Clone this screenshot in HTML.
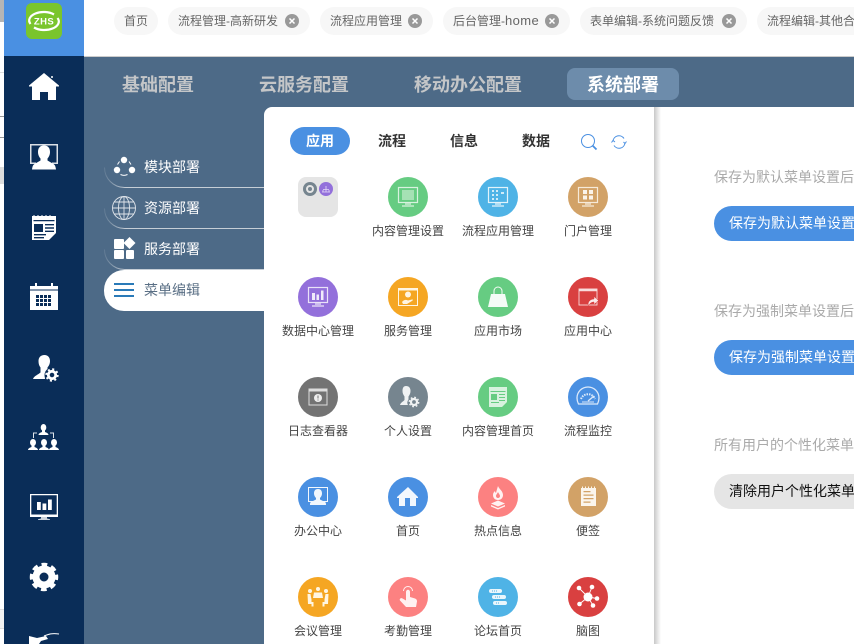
<!DOCTYPE html>
<html><head><meta charset="utf-8">
<style>
*{box-sizing:border-box;margin:0;padding:0}
html,body{width:854px;height:644px;overflow:hidden;background:#fff}
body{position:relative;font-family:"Liberation Sans","Noto Sans CJK SC",sans-serif}
.a{position:absolute}
.chip{position:absolute;top:7px;height:28px;background:#f7f7f7;border-radius:14px;font-size:12px;line-height:28px;color:#666;padding-left:10px;white-space:nowrap;overflow:hidden}
.x{position:absolute;top:7px;width:14px;height:14px}
.tab{position:absolute;top:75px;font-size:18px;font-weight:700;line-height:20px;color:#c4c6c8;white-space:nowrap}
.mi{position:absolute;left:104px;width:160px;height:41px;font-size:14px;line-height:41px;color:#fff;padding-left:40px}
.ptab{position:absolute;top:127px;height:28px;width:60px;text-align:center;font-size:14px;font-weight:700;line-height:28px;color:#333}
.c{position:absolute;width:40px;height:40px;border-radius:50%}
.c svg{display:block;width:40px;height:40px}
.l{position:absolute;width:90px;text-align:center;font-size:12px;line-height:18px;color:#444;white-space:nowrap}
.rt{position:absolute;left:714px;width:140px;overflow:hidden;font-size:14px;line-height:20px;color:#aaa;white-space:nowrap}
.btn{position:absolute;left:714px;width:140px;overflow:hidden;height:35px;border-radius:18px 0 0 18px;font-size:14px;line-height:35px;padding-left:15px;white-space:nowrap;background:#4a90e2;color:#fff}
.side{position:absolute;left:24px;width:40px;height:40px}
</style></head><body>

<!-- left strip -->
<div class="a" style="left:0;top:0;width:4px;height:22px;background:#b5b5b5"></div>
<div class="a" style="left:0;top:72px;width:4px;height:1px;background:#ddd"></div>
<div class="a" style="left:0;top:116px;width:4px;height:1px;background:#999"></div>
<div class="a" style="left:0;top:137px;width:4px;height:1px;background:#999"></div>
<div class="a" style="left:0;top:167px;width:4px;height:17px;background:#ddd"></div>
<div class="a" style="left:0;top:609px;width:4px;height:20px;background:#f2f2f2;border-top:1px solid #ddd;border-bottom:1px solid #ddd"></div>

<!-- sidebar -->
<div class="a" style="left:4px;top:0;width:80px;height:644px;background:#0a2d58"></div>
<div class="a" style="left:4px;top:0;width:80px;height:56px;background:#4a90e2"></div>
<div class="a" style="left:26px;top:3px;width:36px;height:36px;background:#7ac52c;border-radius:6px"></div>
<svg class="a" style="left:26px;top:3px" width="36" height="36" viewBox="0 0 36 36"><path d="M4.500 21A14.500 8.500 0 0 1 28 11.500" fill="none" stroke="#fff" stroke-width="2.200"/><path d="M31.500 15A14.500 8.500 0 0 1 8 24.500" fill="none" stroke="#fff" stroke-width="2.200"/><text x="18" y="21.500" font-family="Liberation Sans" font-size="9.500" font-weight="700" fill="#fff" text-anchor="middle" letter-spacing=".4">ZHS</text></svg>

<svg class="side" style="top:67px" viewBox="0 0 40 40" fill="#fff"><path d="M20 6 5 18.500v1h3V33h8V25h8v8h8V19.500h3v-1L20 6z"/><circle cx="28" cy="10" r="1"/></svg>
<svg class="side" style="top:137px" viewBox="0 0 40 40" fill="#fff"><path fill-rule="evenodd" d="M6 7h28v20h-6v-1.500h4.500V8.500h-25v17H12V27H6z" opacity=".85"/><path d="M20 8.500c4.500 0 6 3 6 6.500 0 3-1.300 5.200-2.500 6.500v2l6 3.500c1.300.8 2 2 2.500 5.500H8c.5-3.500 1.200-4.700 2.500-5.500l6-3.500v-2C15.300 20.200 14 18 14 15c0-3.500 1.500-6.500 6-6.500z"/></svg>
<svg class="side" style="top:207px" viewBox="0 0 40 40" fill="#fff"><path fill-rule="evenodd" d="M8 9h1.500V8h1v1h3V8h1v1h3V8h1v1h3V8h1v1h3V8h1v1H32v17l-7 7H8zM9.500 13v1.300h21V13zM10 17v8h9v-8zM21 17v1.400h9V17zM21 20.300v1.400h9v-1.400zM21 23.600V25h9v-1.400zM10 27v1.400h12V27zM10 30v1.400h10V30z"/><rect x="12" y="19" width="4" height="4" fill="#0a2d58"/></svg>
<svg class="side" style="top:277px" viewBox="0 0 40 40" fill="#fff"><path d="M6 9h5V6h2v3h14V6h2v3h5v24H6z"/><path fill="#0a2d58" d="M6 12.500h28v1H6z"/><g fill="#0a2d58"><rect x="12" y="18" width="3" height="3"/><rect x="16" y="18" width="3" height="3"/><rect x="20" y="18" width="3" height="3"/><rect x="24" y="18" width="3" height="3"/><rect x="12" y="22" width="3" height="3"/><rect x="16" y="22" width="3" height="3"/><rect x="20" y="22" width="3" height="3"/><rect x="24" y="22" width="3" height="3"/><rect x="12" y="26" width="3" height="3"/><rect x="16" y="26" width="3" height="3"/><rect x="20" y="26" width="3" height="3"/><rect x="24" y="26" width="3" height="3"/></g></svg>
<svg class="side" style="top:348px" viewBox="0 0 40 40" fill="#fff"><path d="M20.500 7c3.500 0 5.500 2.500 5.500 6 0 3-1.300 5-2.500 6.500V22c-1.500 2-3 5-2.500 9H9c1-2.500 3-3.500 5.500-5l2-1.500v-5c-1.200-1.500-2-3.500-2-6.500 0-3.500 2-6 6-6z"/><circle cx="28" cy="27" r="7.500" fill="#0a2d58"/><circle cx="28" cy="27" r="3.700" fill="none" stroke="#fff" stroke-width="2.800"/><circle cx="28" cy="27" r="5.700" fill="none" stroke="#fff" stroke-width="2" stroke-dasharray="2 2.480"/></svg>
<svg class="side" style="top:418px" viewBox="0 0 40 40" fill="#fff"><ellipse cx="19.500" cy="9.500" rx="2.800" ry="3.500"/><path d="M14.500 17c0-1.500 2-2.500 3.500-3v-2h3v2c1.500.5 3.500 1.500 3.500 3z"/><ellipse cx="9" cy="24.500" rx="3" ry="3.500"/><ellipse cx="20" cy="24.500" rx="3" ry="3.500"/><ellipse cx="30" cy="24.500" rx="3" ry="3.500"/><path d="M4 32c0-1.500 2-2.500 3.500-3v-2h3v2c1.500.5 3.500 1.500 3.500 3zM15 32c0-1.500 2-2.500 3.500-3v-2h3v2c1.500.5 3.500 1.500 3.500 3zM25 32c0-1.500 2-2.500 3.500-3v-2h3v2c1.500.5 3.500 1.500 3.500 3z"/><path d="M9.500 20v-5H13M29.500 20v-5H26" fill="none" stroke="#dfe4ea" stroke-width="1"/></svg>
<svg class="side" style="top:486px" viewBox="0 0 40 40" fill="#fff"><path fill-rule="evenodd" d="M6 8h28v23H6zM7.300 9.300V28.500h25.400V9.300z"/><path d="M13 16h3.800v8H13zM18.500 17.500h3.800v6.500h-3.800zM24 13.500h3.800V24H24z"/><path d="M17 31h6v1.500l3 .7V34H14v-.8l3-.7z" opacity=".8"/></svg>
<svg class="side" style="top:557px" viewBox="0 0 40 40"><circle cx="20" cy="20" r="8" fill="none" stroke="#fff" stroke-width="7"/><circle cx="20" cy="20" r="12" fill="none" stroke="#fff" stroke-width="4.500" stroke-dasharray="5.500 3.920" stroke-dashoffset="2.700"/></svg>
<svg class="a" style="left:24px;top:630px" width="40" height="14" viewBox="0 0 40 14"><path d="M5 6 13 8 22 6 24 9 17 11 15 14H5z" fill="#fff"/><path d="M20 6C25 4 28 3 35 4" fill="none" stroke="#fff" stroke-width="1"/></svg>

<!-- header tabs -->
<div class="a" style="left:84px;top:56px;width:770px;height:1px;background:#ccc"></div>
<div class="chip" style="left:114px;width:44px">首页</div>
<div class="chip" style="left:168px;width:142px">流程管理-高新研发<svg class="x" style="left:117px" viewBox="0 0 14 14"><circle cx="7" cy="7" r="7" fill="#999"/><path d="M4.500 4.500l5 5M9.500 4.500l-5 5" stroke="#fff" stroke-width="1.500"/></svg></div>
<div class="chip" style="left:320px;width:113px">流程应用管理<svg class="x" style="left:88px" viewBox="0 0 14 14"><circle cx="7" cy="7" r="7" fill="#999"/><path d="M4.500 4.500l5 5M9.500 4.500l-5 5" stroke="#fff" stroke-width="1.500"/></svg></div>
<div class="chip" style="left:443px;width:127px">后台管理-<span style="font-size:13px;letter-spacing:.4px">home</span><svg class="x" style="left:102px" viewBox="0 0 14 14"><circle cx="7" cy="7" r="7" fill="#999"/><path d="M4.500 4.500l5 5M9.500 4.500l-5 5" stroke="#fff" stroke-width="1.500"/></svg></div>
<div class="chip" style="left:580px;width:167px">表单编辑-系统问题反馈<svg class="x" style="left:142px" viewBox="0 0 14 14"><circle cx="7" cy="7" r="7" fill="#999"/><path d="M4.500 4.500l5 5M9.500 4.500l-5 5" stroke="#fff" stroke-width="1.500"/></svg></div>
<div class="chip" style="left:757px;width:97px;border-radius:14px 0 0 14px">流程编辑-其他合</div>

<!-- blue band -->
<div class="a" style="left:84px;top:57px;width:770px;height:587px;background:#4d6a87"></div>
<div class="tab" style="left:122px">基础配置</div>
<div class="tab" style="left:259px">云服务配置</div>
<div class="tab" style="left:414px">移动办公配置</div>
<div class="a" style="left:567px;top:68px;width:112px;height:32px;background:#6d8cab;border-radius:8px"></div>
<div class="tab" style="left:587px;color:#fff">系统部署</div>

<!-- white area -->
<div class="a" style="left:264px;top:107px;width:590px;height:537px;background:#fff;border-top-left-radius:8px"></div>
<div class="a" style="left:654px;top:107px;width:7px;height:537px;background:linear-gradient(90deg,#c8c8c8,#fff)"></div>

<!-- side menu -->
<svg class="a" style="left:100px;top:140px" width="164" height="135" viewBox="100 140 164 135" fill="none">
<defs><linearGradient id="g" gradientUnits="userSpaceOnUse" x1="104" y1="0" x2="126" y2="0"><stop offset="0" stop-color="#c6ced6" stop-opacity=".15"/><stop offset="1" stop-color="#c6ced6"/></linearGradient></defs>
<path d="M104.500 167.500a20 20 0 0 0 20 20H264" stroke="url(#g)"/>
<path d="M104.500 208.500a20 20 0 0 0 20 20H264" stroke="url(#g)"/>
<path d="M104.500 249.500a20 20 0 0 0 20 20H264" stroke="url(#g)"/>
</svg>
<div class="mi" style="top:147px">模块部署</div>
<div class="mi" style="top:188px">资源部署</div>
<div class="mi" style="top:229px">服务部署</div>
<div class="a" style="left:104px;top:270px;width:160px;height:41px;background:#fff;border-radius:20px 0 0 20px;font-size:14px;line-height:41px;color:#5a6f85;padding-left:40px">菜单编辑</div>
<svg class="a" style="left:112px;top:155px" width="24" height="24" viewBox="0 0 24 24" fill="#fff"><circle cx="12" cy="5" r="3.200"/><circle cx="5" cy="15" r="3.200"/><circle cx="20" cy="15" r="3.200"/><path d="M5.500 9.500 7.500 6.500M19 9.500 17 6.500M8.500 19.500a8 8 0 0 0 7 0" fill="none" stroke="#fff" stroke-width="1"/></svg>
<svg class="a" style="left:112px;top:196px" width="24" height="24" viewBox="0 0 24 24" fill="none" stroke="#dfe4ea" stroke-width=".9"><circle cx="12" cy="12" r="11.500"/><ellipse cx="12" cy="12" rx="5.500" ry="11.500"/><path d="M12 .5v23M.5 12h23M2.500 6h19M2.500 18h19"/></svg>
<svg class="a" style="left:112px;top:237px" width="24" height="24" viewBox="0 0 24 24" fill="#fff"><rect x="2" y="2" width="10" height="10" rx="1"/><rect x="2" y="13" width="10" height="9" rx="1"/><rect x="14" y="13" width="8" height="9" rx="1"/><path d="M17.500 0l6 6-6 6-6-6z"/></svg>
<svg class="a" style="left:114px;top:283px" width="20" height="14" viewBox="0 0 20 14" fill="#2a7ab8"><rect width="20" height="2"/><rect y="6" width="20" height="2"/><rect y="12" width="20" height="2"/></svg>

<!-- panel tabs -->
<div class="ptab" style="left:290px;background:#4a90e2;color:#fff;border-radius:14px">应用</div>
<div class="ptab" style="left:362px">流程</div>
<div class="ptab" style="left:434px">信息</div>
<div class="ptab" style="left:506px">数据</div>
<svg class="a" style="left:580px;top:133px" width="18" height="18" viewBox="0 0 18 18" fill="none" stroke="#4a90e2" stroke-width="1"><circle cx="8" cy="8" r="6.500"/><path d="M12.500 12.500l4 4" stroke-width="1.800"/></svg>
<svg class="a" style="left:611px;top:134px" width="16" height="16" viewBox="0 0 16 16" fill="none" stroke="#4a90e2" stroke-width="1"><path d="M2 7A6 6 0 0 1 13 4.500"/><path d="M14 9A6 6 0 0 1 3 11.500"/><path d="M.5 8.500l1.500-2 2 1.500M15.500 7.500l-1.500 2-1.500-1.500"/></svg>

<!-- row 1 -->
<div class="a" style="left:298px;top:177px;width:40px;height:40px;background:#e5e5e5;border-radius:8px"></div>
<svg class="a" style="left:303px;top:182px" width="14" height="14" viewBox="0 0 14 14"><circle cx="7" cy="7" r="7" fill="#76858f"/><circle cx="7" cy="7" r="3" fill="none" stroke="#e5e5e5" stroke-width="2"/></svg>
<svg class="a" style="left:319px;top:182px" width="14" height="14" viewBox="0 0 14 14"><circle cx="7" cy="7" r="7" fill="#9370db"/><path d="M3 10h8M4 10V8M7 10V4M10 10V8M4 7.500h6" stroke="#e5daf7" stroke-width=".8"/></svg>

<div class="c" style="left:388px;top:177px;background:#66cc82"><svg viewBox="0 0 40 40" fill="none" stroke="#d8f2df"><rect x="10.500" y="10.500" width="19" height="15" stroke-width="1.200"/><rect x="14" y="13" width="12" height="10" fill="#d8f2df" opacity=".55" stroke="none"/><path d="M17 27h6M14 29h12" stroke-width="1.200"/></svg></div>
<div class="l" style="left:363px;top:222px">内容管理设置</div>
<div class="c" style="left:478px;top:177px;background:#4fb3e6"><svg viewBox="0 0 40 40" fill="none" stroke="#e2f3fb"><rect x="10.500" y="10.500" width="19" height="15" stroke-width="1.200"/><path d="M14 14h2M18 14h2M14 18h2M18 18h2M23 16h3M14 22h2M18 22h2" stroke-width="1.800"/><path d="M17 27h6M14 29h12" stroke-width="1.200"/></svg></div>
<div class="l" style="left:453px;top:222px">流程应用管理</div>
<div class="c" style="left:568px;top:177px;background:#d2a267"><svg viewBox="0 0 40 40" fill="none" stroke="#f6ead9"><rect x="10.500" y="10.500" width="19" height="15" stroke-width="1.200"/><path d="M15 13h4v4h-4zM21 13h4v4h-4zM15 18.500h4v4h-4zM21 18.500h4v4h-4z" fill="#faf3ea" stroke="none"/><path d="M17 27h6M14 29h12" stroke-width="1.200"/></svg></div>
<div class="l" style="left:543px;top:222px">门户管理</div>

<!-- row 2 -->
<div class="c" style="left:298px;top:277px;background:#9370db"><svg viewBox="0 0 40 40" fill="none" stroke="#e9e2f8"><rect x="10.500" y="10.500" width="19" height="15" stroke-width="1.200"/><path d="M14 16h3v7h-3zM18.500 17.500H21V23h-2.500zM23 13.500h2.500V23H23z" fill="#f0ebfa" stroke="none"/><path d="M17 27h6M14 29h12" stroke-width="1.200"/></svg></div>
<div class="l" style="left:273px;top:322px">数据中心管理</div>
<div class="c" style="left:388px;top:277px;background:#f5a623"><svg viewBox="0 0 40 40" fill="#fff5e2"><path fill-rule="evenodd" d="M10 11h20v18H10zM11 13.500V28h18V13.500z"/><circle cx="20" cy="17.500" r="3"/><path d="M14 25c2-2.500 4-2.500 6-1.500l4-1c1.500 0 1 1-.5 1.800L19 27h-4z"/></svg></div>
<div class="l" style="left:363px;top:322px">服务管理</div>
<div class="c" style="left:478px;top:277px;background:#66cc82"><svg viewBox="0 0 40 40"><path d="M13 17h14l3 13H10z" fill="#f4fbf6"/><path d="M16 19v-5a4 4 0 0 1 8 0v5" fill="none" stroke="#f4fbf6" stroke-width="1"/></svg></div>
<div class="l" style="left:453px;top:322px">应用市场</div>
<div class="c" style="left:568px;top:277px;background:#d94040"><svg viewBox="0 0 40 40" fill="none" stroke="#f8dcdc"><rect x="11" y="12" width="18" height="16" stroke-width=".9"/><path d="M11 13h18" stroke-width="2.400"/><path d="M20 28c0-4 3-6 6-6v-2.500l4.500 4-4.500 4V25c-2 0-4 1-5 3z" fill="#fbeaea" stroke="#d94040" stroke-width=".5"/></svg></div>
<div class="l" style="left:543px;top:322px">应用中心</div>

<!-- row 3 -->
<div class="c" style="left:298px;top:377px;background:#737373"><svg viewBox="0 0 40 40" fill="none" stroke="#ddd"><rect x="11" y="12" width="18" height="16" stroke-width="1"/><path d="M11 13.500h18" stroke-width="2"/><circle cx="20" cy="21" r="4" fill="#eee" stroke="none"/><path d="M20 18.500v3M20 22.500v1" stroke="#737373" stroke-width="1"/></svg></div>
<div class="l" style="left:273px;top:422px">日志查看器</div>
<div class="c" style="left:388px;top:377px;background:#76858f"><svg viewBox="0 0 40 40" fill="#f0f2f3"><path d="M18 9c3 0 4.500 2 4.500 5 0 2.500-1 4-2 5.500v3c-1.500 2-1.500 4-.5 5.500H12c.3-1.500 1.500-2.500 3.500-4l1-1v-3.500c-1-1.500-2-3-2-5.500 0-3 1-5 3.500-5z"/><circle cx="26" cy="25" r="3" fill="none" stroke="#f0f2f3" stroke-width="2.200"/><circle cx="26" cy="25" r="4.700" fill="none" stroke="#f0f2f3" stroke-width="1.400" stroke-dasharray="1.800 1.900"/></svg></div>
<div class="l" style="left:363px;top:422px">个人设置</div>
<div class="c" style="left:478px;top:377px;background:#66cc82"><svg viewBox="0 0 40 40" fill="#d8f2df"><path fill-rule="evenodd" d="M11 10h18v15l-5 5H11zM12.500 14v1h15v-1zM13 17v6h6v-6zM21 17v1h6v-1zM21 20v1h6v-1zM21 23v1h6v-1zM13 25v1h8v-1z"/><rect x="14.500" y="18.500" width="3" height="3" fill="#66cc82"/></svg></div>
<div class="l" style="left:453px;top:422px">内容管理首页</div>
<div class="c" style="left:568px;top:377px;background:#4a90e2"><svg viewBox="0 0 40 40" fill="none" stroke="#dbe9fa"><path d="M10.500 27c-1-2-1.500-4-1.500-6a11 11 0 0 1 22 0c0 2-.5 4-1.500 6z" stroke-width="1.300"/><path d="M13 22a7.500 7.500 0 0 1 14 0" stroke-width="2" stroke-dasharray="1.500 1"/><path d="M20 24l6-5" stroke-width="1.300"/><path d="M14 25h12" stroke-width="1"/></svg></div>
<div class="l" style="left:543px;top:422px">流程监控</div>

<!-- row 4 -->
<div class="c" style="left:298px;top:477px;background:#4a90e2"><svg viewBox="0 0 40 40" fill="#f2f7fd"><path fill-rule="evenodd" d="M10 10h20v15H10zM11 11v13h18V11z"/><path d="M20 12c3 0 4 2 4 4.500 0 2-1 3.500-2 4.500v1.500l5 2.500c.8.500 1 1 1 3H12c0-2 .2-2.500 1-3l5-2.500V21c-1-1-2-2.500-2-4.500 0-2.500 1-4.500 4-4.500z"/></svg></div>
<div class="l" style="left:273px;top:522px">办公中心</div>
<div class="c" style="left:388px;top:477px;background:#4a90e2"><svg viewBox="0 0 40 40" fill="#f2f7fd"><path d="M20 10 9 20v1h2v8h6v-8h5v8h6v-8h2v-1z"/></svg></div>
<div class="l" style="left:363px;top:522px">首页</div>
<div class="c" style="left:478px;top:477px;background:#fc8181"><svg viewBox="0 0 40 40" fill="#fff1f1"><path fill-rule="evenodd" d="M20 9c1 3 5 5 5 9 0 3-2 5-5 5s-5-2-5-5c0-2 1-3 2-4 0 1 .5 1.500 1 2 .5-2 1-4 2-7zM20 15c-.5 1.500-2 2.500-2 4 0 1.300 1 2 2 2s2-.7 2-2c0-1.500-1.500-2.500-2-4z"/><path d="M20 23.500l7 3-7 3-7-3zM13 28l7 3 7-3v1.500l-7 3-7-3z"/></svg></div>
<div class="l" style="left:453px;top:522px">热点信息</div>
<div class="c" style="left:568px;top:477px;background:#d2a267"><svg viewBox="0 0 40 40" fill="#fbf5ec"><path fill-rule="evenodd" d="M13 11h15v18H13zM15.500 14v1.300h7V14zM15.500 17.500v1.300h10v-1.300zM15.500 21v1.300h10V21zM15.500 24.500v1.300h7v-1.300z"/><path d="M14 9.500h1v2h-1zM17 9.500h1v2h-1zM20 9.500h1v2h-1zM23 9.500h1v2h-1zM26 9.500h1v2h-1z"/></svg></div>
<div class="l" style="left:543px;top:522px">便签</div>

<!-- row 5 -->
<div class="c" style="left:298px;top:577px;background:#f5a623"><svg viewBox="0 0 40 40" fill="#fff5e2"><circle cx="20" cy="12" r="2"/><circle cx="12" cy="14" r="2"/><circle cx="28" cy="14" r="2"/><path d="M16 15.500h8l1 5.500H15zM9.500 17h3l1 5.500v2.500h2v4.500h-2V27H10zM30.500 17h-3l-1 5.500v2.500h-2v4.500h2V27H30z"/></svg></div>
<div class="l" style="left:273px;top:622px">会议管理</div>
<div class="c" style="left:388px;top:577px;background:#fc8181"><svg viewBox="0 0 40 40" fill="#fff1f1"><path d="M18 15c0-3 4-3 4 0v5l5 1.500c1.500.5 2 1.500 2 3L28 30H18l-6-6.500c-1-1.500 1-3 2.500-2L18 23.500z"/><path d="M15.500 14a4.500 4.500 0 0 1 9 0" fill="none" stroke="#fff1f1" stroke-width="1"/></svg></div>
<div class="l" style="left:363px;top:622px">考勤管理</div>
<div class="c" style="left:478px;top:577px;background:#4fb3e6"><svg viewBox="0 0 40 40"><rect x="11" y="12" width="13" height="4" rx="2" fill="#eaf6fc"/><rect x="14" y="18" width="14" height="4" rx="2" fill="#eaf6fc"/><rect x="15" y="24" width="14" height="4" rx="2" fill="#eaf6fc"/><path d="M14 14h1M16 14h1M18 14h1M17 20h1M19 20h1M21 20h1M18 26h1M20 26h1" stroke="#4fb3e6" stroke-width="1"/></svg></div>
<div class="l" style="left:453px;top:622px">论坛首页</div>
<div class="c" style="left:568px;top:577px;background:#d94040"><svg viewBox="0 0 40 40" fill="#fff"><path d="M20 20 11 11M20 20 24 10M20 20 29 21.500M20 20 25 28.500M20 20 11.500 27" stroke="#fff" stroke-width=".9"/><circle cx="20" cy="20" r="4.500"/><circle cx="11" cy="11" r="2.300"/><circle cx="24" cy="10" r="2.300"/><circle cx="29" cy="21.500" r="2.300"/><circle cx="25" cy="28.500" r="2.300"/><circle cx="11.500" cy="27" r="2.300"/></svg></div>
<div class="l" style="left:543px;top:622px">脑图</div>

<!-- right -->
<div class="rt" style="top:167px">保存为默认菜单设置后</div>
<div class="btn" style="top:206px">保存为默认菜单设置</div>
<div class="rt" style="top:301px">保存为强制菜单设置后</div>
<div class="btn" style="top:340px">保存为强制菜单设置</div>
<div class="rt" style="top:435px">所有用户的个性化菜单</div>
<div class="btn" style="top:474px;background:#e5e5e5;color:#111">清除用户个性化菜单</div>

</body></html>
